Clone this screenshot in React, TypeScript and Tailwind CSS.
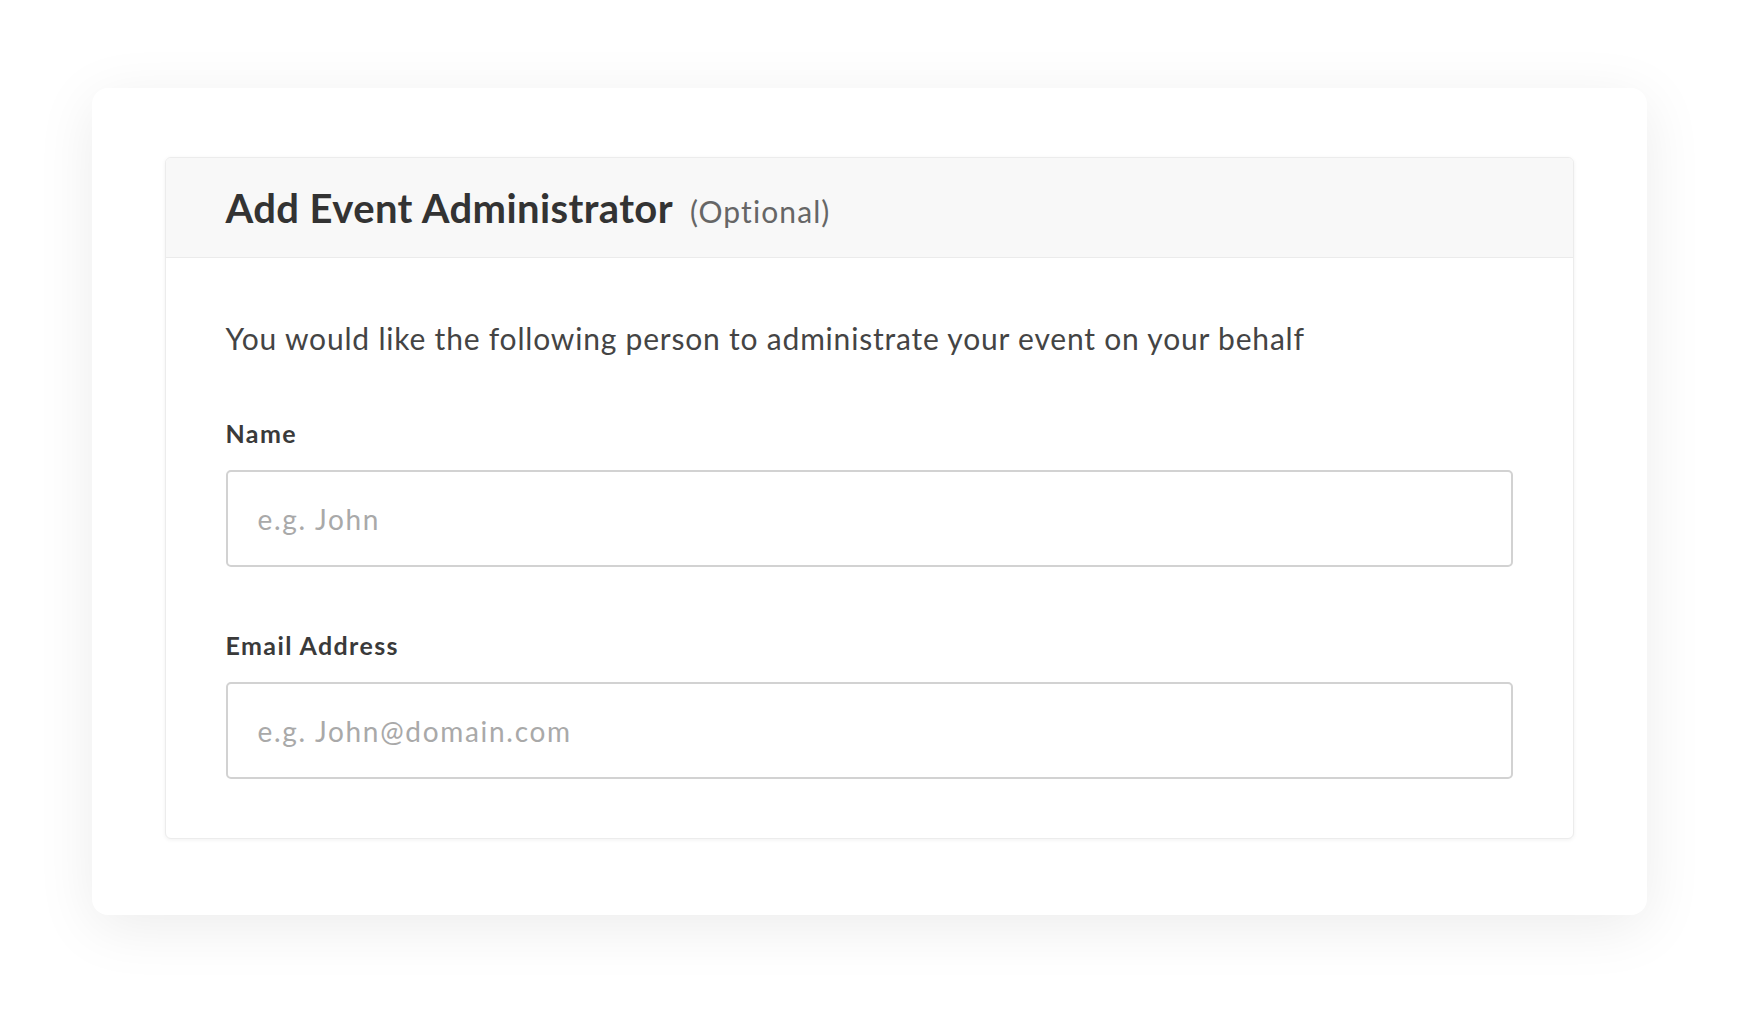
export default function App() {
  return (
    <div
      className="min-h-screen bg-white pt-[88px] pb-[96px] [font-variant-ligatures:none]"
      style={{ fontFamily: "Lato, 'Open Sans', sans-serif" }}
    >
      <div className="mx-auto w-[1555px] rounded-[16px] bg-white pt-[69px] pb-[76px] px-[73px] shadow-[0_12px_60px_rgba(0,0,0,0.08)]">
        {/* Section card */}
        <div className="rounded-[6px] border border-[#ececec] bg-white shadow-[0_1px_4px_rgba(0,0,0,0.06)] overflow-hidden">
          <div className="flex items-baseline gap-[17px] border-b border-[#ebebeb] bg-[#f8f8f8] px-[60px] pt-[26px] pb-[25px]">
            <h2 className="text-[40px] leading-[48px] font-bold tracking-[0.4px] text-[#333333]">
              Add Event Administrator
            </h2>
            <span className="text-[30px] leading-[36px] tracking-[1.1px] text-[#666666]">(Optional)</span>
          </div>

          <div className="px-[60px] pt-[62px] pb-[59px]">
            <p className="text-[30px] leading-[36px] tracking-[0.8px] text-[#444444]">
              You would like the following person to administrate your event on your behalf
            </p>

            <Field label="Name" placeholder="e.g. John" className="mt-[63px]" />
            <Field label="Email Address" placeholder="e.g. John@domain.com" type="email" className="mt-[64px]" />
          </div>
        </div>
      </div>
    </div>
  );
}

type FieldProps = {
  label: string;
  placeholder: string;
  type?: string;
  className?: string;
};

function Field({ label, placeholder, type = "text", className = "" }: FieldProps) {
  return (
    <div className={className}>
      <label className="block text-[25px] leading-[29px] font-bold tracking-[1.4px] text-[#3a3a3a]">{label}</label>
      <input
        type={type}
        placeholder={placeholder}
        className="mt-[22px] block h-[97px] w-full rounded-[5px] border-2 border-[#d2d2d2] bg-white px-[30px] text-[28px] tracking-[1.7px] text-[#333333] placeholder:text-[#a9a9a9] outline-none [font-variant-ligatures:none]"
        style={{ fontFamily: "Lato, 'Open Sans', sans-serif" }}
      />
    </div>
  );
}
